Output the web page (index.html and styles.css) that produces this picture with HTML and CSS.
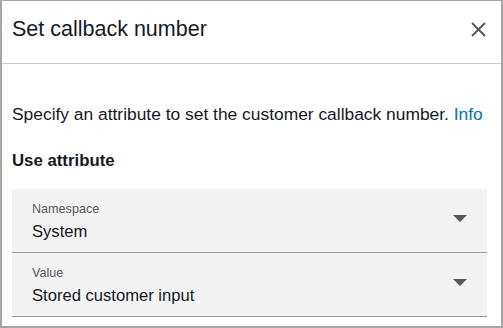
FILE: index.html
```html
<!DOCTYPE html>
<html lang="en">
<head>
    <meta charset="UTF-8" />
    <title>Set callback number</title>
    <link rel="stylesheet" href="styles.css">
</head>
<body>

<div class="modal">
    <header class="modal-header">
        <h1>Set callback number</h1>
        <button class="close-btn" aria-label="Close">
            <svg width="15" height="15" viewBox="0 0 15 15">
                <path d="M1 1 L14 14 M14 1 L1 14" stroke="#545b64" stroke-width="2" fill="none"/>
            </svg>
        </button>
    </header>

    <div class="modal-body">
        <p class="description">Specify an attribute to set the customer callback number. <a href="#">Info</a></p>
        <h2>Use attribute</h2>

        <div class="fields">
            <div class="select-field">
                <div class="select-text">
                    <span class="select-label">Namespace</span>
                    <span class="select-value">System</span>
                </div>
                <span class="caret"></span>
            </div>
            <div class="select-field">
                <div class="select-text">
                    <span class="select-label">Value</span>
                    <span class="select-value">Stored customer input</span>
                </div>
                <span class="caret"></span>
            </div>
        </div>
    </div>
</div>

</body>
</html>
```

FILE: styles.css
```css
html, body {
    margin: 0;
    height: 100%;
}

body {
    font-family: "Liberation Sans", Arial, sans-serif;
    color: #16191f;
    background: #fff;
}

.modal {
    box-sizing: border-box;
    height: 328px;
    border: 2px solid #a6a6a6;
    border-top-width: 1px;
    background: #fff;
}

/* Header */
.modal-header {
    display: flex;
    align-items: center;
    justify-content: space-between;
    height: 62px;
    padding: 0 15px 0 10px;
    border-bottom: 1px solid #cccccc;
}

.modal-header h1 {
    margin: 0;
    font-size: 21.5px;
    font-weight: normal;
    color: #16191f;
    padding-bottom: 6px;
}

.close-btn {
    background: none;
    border: none;
    padding: 0;
    width: 15px;
    height: 15px;
    margin-bottom: 6px;
    cursor: pointer;
}

.close-btn svg {
    display: block;
}

/* Body */
.modal-body {
    padding: 0 14px 0 10px;
}

.description {
    margin: 0;
    padding-top: 39px;
    font-size: 17.4px;
    line-height: 22px;
}

.description a {
    color: #0073bb;
    text-decoration: none;
}

.modal-body h2 {
    margin: 0;
    padding-top: 25px;
    font-size: 16.8px;
    line-height: 22px;
    font-weight: bold;
}

.fields {
    margin-top: 17px;
    background: #f3f3f3;
}

.select-field {
    display: flex;
    align-items: center;
    justify-content: space-between;
    height: 63px;
    padding: 0 20px;
    border-bottom: 1px solid #999999;
}

.select-text {
    display: flex;
    flex-direction: column;
    padding-top: 1px;
}

.select-label {
    font-size: 12.6px;
    line-height: 16px;
    color: #545b64;
    margin-bottom: 4px;
}

.select-value {
    font-size: 16.6px;
    line-height: 20px;
    color: #16191f;
    padding-top: 1px;
}

.caret {
    width: 0;
    height: 0;
    border-left: 7px solid transparent;
    border-right: 7px solid transparent;
    border-top: 7px solid #545b64;
    margin-bottom: 4px;
}
```
